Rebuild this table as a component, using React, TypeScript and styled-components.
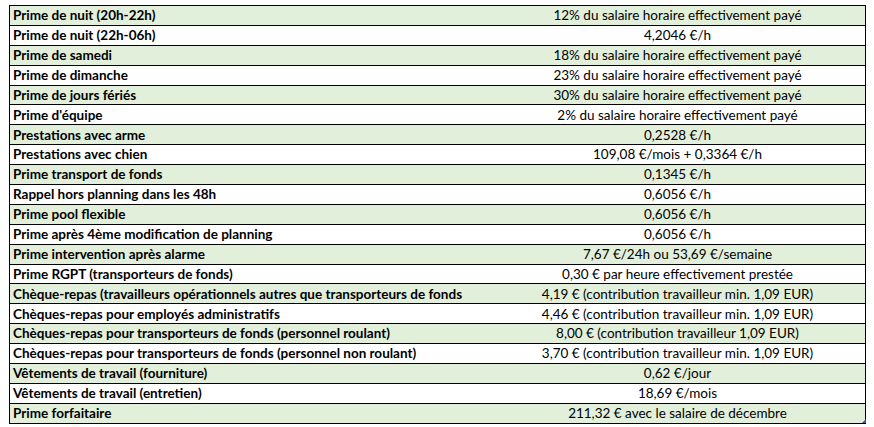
import React from "react";
import styled, { createGlobalStyle } from "styled-components";

const Global = createGlobalStyle`
  html, body { margin: 0; padding: 0; background: #ffffff; }
  body { padding: 5px 0 0 9px; }
`;

const rows: [string, string][] = [
  ["Prime de nuit (20h-22h)", "12% du salaire horaire effectivement payé"],
  ["Prime de nuit (22h-06h)", "4,2046 €/h"],
  ["Prime de samedi", "18% du salaire horaire effectivement payé"],
  ["Prime de dimanche", "23% du salaire horaire effectivement payé"],
  ["Prime de jours fériés", "30% du salaire horaire effectivement payé"],
  ["Prime d'équipe", "2% du salaire horaire effectivement payé"],
  ["Prestations avec arme", "0,2528 €/h"],
  ["Prestations avec chien", "109,08 €/mois + 0,3364 €/h"],
  ["Prime transport de fonds", "0,1345 €/h"],
  ["Rappel hors planning dans les 48h", "0,6056 €/h"],
  ["Prime pool flexible", "0,6056 €/h"],
  ["Prime après 4ème modification de planning", "0,6056 €/h"],
  ["Prime intervention après alarme", "7,67 €/24h ou 53,69 €/semaine"],
  ["Prime RGPT (transporteurs de fonds)", "0,30 € par heure effectivement prestée"],
  ["Chèque-repas (travailleurs opérationnels autres que transporteurs de fonds", "4,19 € (contribution travailleur min. 1,09 EUR)"],
  ["Chèques-repas pour employés administratifs", "4,46 € (contribution travailleur min. 1,09 EUR)"],
  ["Chèques-repas pour transporteurs de fonds (personnel roulant)", "8,00 € (contribution travailleur 1,09 EUR)"],
  ["Chèques-repas pour transporteurs de fonds (personnel non roulant)", "3,70 € (contribution travailleur min. 1,09 EUR)"],
  ["Vêtements de travail (fourniture)", "0,62 €/jour"],
  ["Vêtements de travail (entretien)", "18,69 €/mois"],
  ["Prime forfaitaire", "211,32 € avec le salaire de décembre"],
];

const Sheet = styled.div`
  position: relative;
  width: 857px;
  box-sizing: border-box;
  border: 1px solid #000;
  display: grid;
  grid-template-columns: 480px 1fr;
  font-family: "Lato", "Open Sans", sans-serif;
  font-size: 13.5px;
  color: #000;
`;

const Cell = styled.div<{ $shade: boolean; $first: boolean; $label?: boolean }>`
  height: ${(p) => (p.$first ? "18.9px" : "19.9px")};
  box-sizing: border-box;
  border-top: ${(p) => (p.$first ? "none" : "1px solid #000")};
  border-right: ${(p) => (p.$label ? "1px solid #000" : "none")};
  width: ${(p) => (p.$label ? "481px" : "auto")};
  background: ${(p) => (p.$shade ? "#e2efda" : "#ffffff")};
  display: flex;
  align-items: center;
  justify-content: ${(p) => (p.$label ? "flex-start" : "center")};
  padding-left: ${(p) => (p.$label ? "3px" : "0")};
  padding-top: 1px;
  font-weight: ${(p) => (p.$label ? 700 : 400)};
  white-space: nowrap;
  line-height: 1;
`;

const Grip = styled.svg`
  position: absolute;
  right: -1px;
  bottom: 0;
`;

export default function App() {
  return (
    <>
      <Global />
      <Sheet>
        {rows.map(([k, v], i) => (
          <React.Fragment key={i}>
            <Cell $shade={i % 2 === 0} $first={i === 0} $label>
              {k}
            </Cell>
            <Cell $shade={i % 2 === 0} $first={i === 0}>
              {v}
            </Cell>
          </React.Fragment>
        ))}
        <Grip width="4" height="4" viewBox="0 0 4 4">
          <polygon points="4,0 4,4 0,4" fill="#3f4fa8" />
        </Grip>
      </Sheet>
    </>
  );
}
